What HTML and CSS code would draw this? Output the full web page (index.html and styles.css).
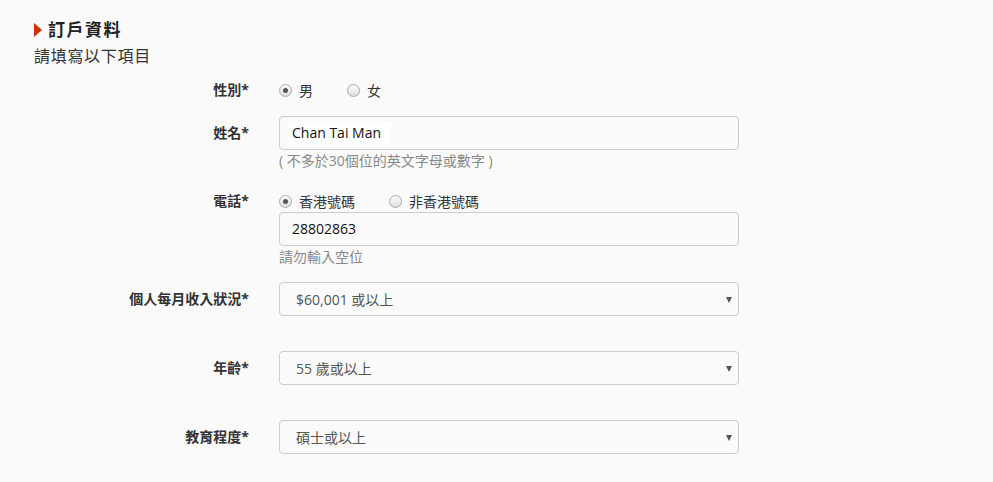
FILE: index.html
```html
<!DOCTYPE html>
<html lang="zh-Hant">
<head>
<meta charset="utf-8">
<title>訂戶資料</title>
<link rel="stylesheet" href="styles.css">
</head>
<body>
<div class="page">
  <h2 class="title"><span class="tri"></span>訂戶資料</h2>
  <p class="subtitle">請填寫以下項目</p>

  <div class="form">
    <div class="row row-radio r1">
      <div class="label">性別*</div>
      <div class="field">
        <div class="radios">
          <label class="radio"><span class="dot on"></span>男</label>
          <label class="radio"><span class="dot"></span>女</label>
        </div>
      </div>
    </div>

    <div class="row r2">
      <div class="label lab-input">姓名*</div>
      <div class="field">
        <div class="input"><span class="val">Chan Tai Man</span></div>
        <div class="help">( 不多於30個位的英文字母或數字 )</div>
      </div>
    </div>

    <div class="row r3">
      <div class="label lab-radio">電話*</div>
      <div class="field">
        <div class="radios">
          <label class="radio wide"><span class="dot on"></span>香港號碼</label>
          <label class="radio auto"><span class="dot"></span>非香港號碼</label>
        </div>
        <div class="input"><span class="val plain">28802863</span></div>
        <div class="help">請勿輸入空位</div>
      </div>
    </div>

    <div class="row r4">
      <div class="label lab-input">個人每月收入狀況*</div>
      <div class="field">
        <div class="select">$60,001 或以上<span class="arrow"></span></div>
      </div>
    </div>

    <div class="row r5">
      <div class="label lab-input">年齡*</div>
      <div class="field">
        <div class="select">55 歲或以上<span class="arrow"></span></div>
      </div>
    </div>

    <div class="row r5">
      <div class="label lab-input">教育程度*</div>
      <div class="field">
        <div class="select">碩士或以上<span class="arrow"></span></div>
      </div>
    </div>
  </div>
</div>
</body>
</html>
```

FILE: styles.css
```css
* { box-sizing: border-box; }
html, body {
  margin: 0;
  padding: 0;
  background: #fafafa;
}
body {
  font-family: "Open Sans", "Noto Sans CJK TC", sans-serif;
  color: #333;
  width: 993px;
  height: 482px;
  overflow: hidden;
}
.page {
  padding: 18px 0 0 34px;
}
.title {
  margin: 0;
  display: flex;
  align-items: center;
  font-size: 17px;
  font-weight: bold;
  line-height: 24px;
  color: #222;
  letter-spacing: 1.5px;
}
.tri {
  width: 0;
  height: 0;
  border-top: 7px solid transparent;
  border-bottom: 7px solid transparent;
  border-left: 8px solid #cc3300;
  margin-right: 6px;
}
.subtitle {
  margin: 4px 0 0 0;
  font-size: 16px;
  line-height: 20px;
  letter-spacing: 0.7px;
  color: #333;
}
.form {
  margin-top: 14px;
}
.row {
  display: flex;
  gap: 30px;
}
.label {
  width: 215px;
  text-align: right;
  font-weight: bold;
  font-size: 14px;
  color: #333;
  white-space: nowrap;
}
.row-radio .label { line-height: 20px; }
.lab-input { line-height: 34px; }
.lab-radio { line-height: 20px; }
.field {
  width: 460px;
}
.radios {
  display: flex;
  height: 20px;
  align-items: center;
  font-size: 14px;
  color: #333;
  white-space: nowrap;
}
.radio {
  display: flex;
  align-items: center;
  width: 68px;
}
.radio.wide { width: 110px; }
.radio.auto { width: auto; }
.dot {
  flex: none;
  width: 13px;
  height: 13px;
  border-radius: 50%;
  border: 1px solid #aaa;
  background: linear-gradient(#fdfdfd, #dedede);
  margin-right: 7px;
  position: relative;
}
.dot.on::after {
  content: "";
  position: absolute;
  left: 3px;
  top: 3px;
  width: 5px;
  height: 5px;
  border-radius: 50%;
  background: #555;
}
.r2 { margin-top: 16px; }
.r3 { margin-top: 21px; }
.r3 .radios { margin-bottom: 1px; }
.r4 { margin-top: 16px; }
.r5 { margin-top: 35px; }
.input, .select {
  height: 34px;
  border: 1px solid #ccc;
  border-radius: 4px;
  background: #fafafa;
  display: flex;
  align-items: center;
  font-size: 14px;
}
.input { padding-left: 8px; color: #111; }
.val {
  background: #fff;
  padding: 0 10px 0 4px;
  line-height: 22px;
}
.val.plain { background: transparent; }
.select {
  padding-left: 16px;
  color: #555;
  position: relative;
}
.arrow {
  position: absolute;
  right: 6px;
  top: 14px;
  width: 0;
  height: 0;
  border-left: 3px solid transparent;
  border-right: 3px solid transparent;
  border-top: 6px solid #555;
}
.help {
  font-size: 14px;
  color: #888;
  line-height: 18px;
  margin-top: 2px;
}
```
